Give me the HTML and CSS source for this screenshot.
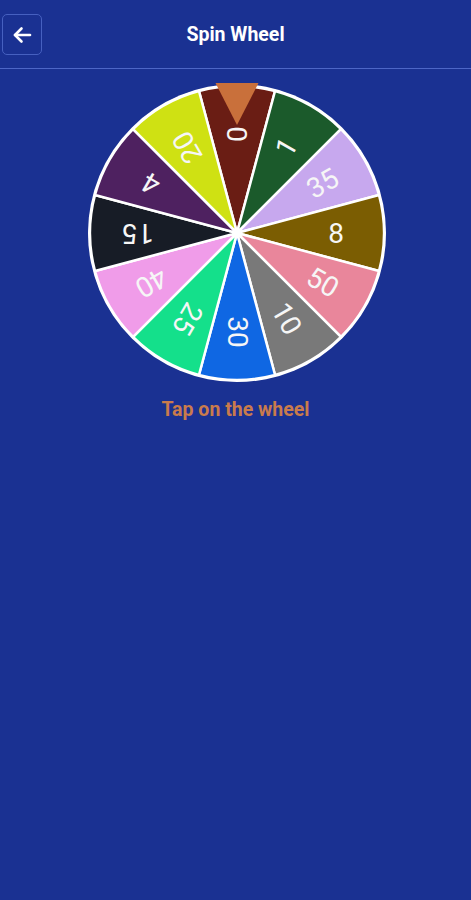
FILE: index.html
```html
<!DOCTYPE html>
<html lang="en">
<head>
<meta charset="utf-8">
<title>Spin Wheel</title>
<link rel="stylesheet" href="styles.css">
</head>
<body>
<header class="topbar">
  <button class="back-btn" aria-label="Back">
    <svg width="24" height="24" viewBox="0 0 24 24" fill="none" stroke="#ffffff" stroke-width="2.6" stroke-linecap="round" stroke-linejoin="round"><path d="M20 12H5"/><path d="M11.5 5.5L5 12l6.5 6.5"/></svg>
  </button>
  <h1 class="title">Spin Wheel</h1>
  <span class="spacer"></span>
</header>
<main class="content">
  <svg class="wheel" width="302" height="302" viewBox="-151 -151 302 302">
    <circle cx="0" cy="0" r="149" fill="#ffffff"/>
    <g stroke="#ffffff" stroke-width="2.5" stroke-linejoin="round">
      <path d="M0 0L-38.047 -141.991A147 147 0 0 1 38.047 -141.991Z" fill="#6a1d14"/>
      <path d="M0 0L38.047 -141.991A147 147 0 0 1 103.945 -103.945Z" fill="#1b5a2b"/>
      <path d="M0 0L103.945 -103.945A147 147 0 0 1 141.991 -38.047Z" fill="#c7a8ee"/>
      <path d="M0 0L141.991 -38.047A147 147 0 0 1 141.991 38.047Z" fill="#7b5d02"/>
      <path d="M0 0L141.991 38.047A147 147 0 0 1 103.945 103.945Z" fill="#e9869b"/>
      <path d="M0 0L103.945 103.945A147 147 0 0 1 38.047 141.991Z" fill="#797979"/>
      <path d="M0 0L38.047 141.991A147 147 0 0 1 -38.047 141.991Z" fill="#0f67e3"/>
      <path d="M0 0L-38.047 141.991A147 147 0 0 1 -103.945 103.945Z" fill="#14e08b"/>
      <path d="M0 0L-103.945 103.945A147 147 0 0 1 -141.991 38.047Z" fill="#f09ce9"/>
      <path d="M0 0L-141.991 38.047A147 147 0 0 1 -141.991 -38.047Z" fill="#171c26"/>
      <path d="M0 0L-141.991 -38.047A147 147 0 0 1 -103.945 -103.945Z" fill="#4e2160"/>
      <path d="M0 0L-103.945 -103.945A147 147 0 0 1 -38.047 -141.991Z" fill="#cfe113"/>
    </g>
    <circle cx="0" cy="0" r="5" fill="#ffffff" opacity="0.9"/>
    <g class="labels">
      <text transform="rotate(-90) translate(99 0)">0</text>
      <text transform="rotate(-60) translate(99 0)">1</text>
      <text transform="rotate(-30) translate(99 0)">35</text>
      <text transform="rotate(0) translate(99 0)">8</text>
      <text transform="rotate(30) translate(99 0)">50</text>
      <text transform="rotate(60) translate(99 0)">10</text>
      <text transform="rotate(90) translate(99 0)">30</text>
      <text transform="rotate(120) translate(99 0)">25</text>
      <text transform="rotate(150) translate(99 0)">40</text>
      <text transform="rotate(180) translate(99 0)">15</text>
      <text transform="rotate(210) translate(99 0)">4</text>
      <text transform="rotate(240) translate(99 0)">20</text>
    </g>
    <polygon points="-21.5,-150 21.5,-150 0,-108" fill="#c9703b"/>
  </svg>
  <p class="hint">Tap on the wheel</p>
</main>
</body>
</html>
```
FILE: styles.css
```css
* { box-sizing: border-box; }
html, body {
  margin: 0;
  padding: 0;
  background: #1a3192;
  font-family: Roboto, "Liberation Sans", sans-serif;
  min-height: 900px;
}
.topbar {
  height: 69px;
  display: grid;
  grid-template-columns: 44px 1fr 44px;
  align-items: center;
  padding-left: 2px;
  border-bottom: 1.5px solid #4d66c6;
}
.back-btn {
  width: 40px;
  height: 41px;
  margin-top: 1px;
  border: 1px solid #4660c0;
  border-radius: 5px;
  background: transparent;
  display: flex;
  align-items: center;
  justify-content: center;
  padding: 0;
}
.title {
  margin: 0;
  text-align: center;
  color: #ffffff;
  font-size: 19.5px;
  font-weight: 700;
  margin-left: -2px;
}
.content {
  display: flex;
  flex-direction: column;
  align-items: center;
  padding-top: 13px;
}
.wheel {
  display: block;
  margin-left: 2px;
}
.labels text {
  fill: #f6f6f6;
  font-family: Roboto, "Liberation Sans", sans-serif;
  font-size: 28px;
  text-anchor: middle;
  dominant-baseline: central;
}
.hint {
  margin: 15px 0 0;
  color: #c97b4c;
  font-size: 19.5px;
  font-weight: 700;
  line-height: 22px;
}
```
